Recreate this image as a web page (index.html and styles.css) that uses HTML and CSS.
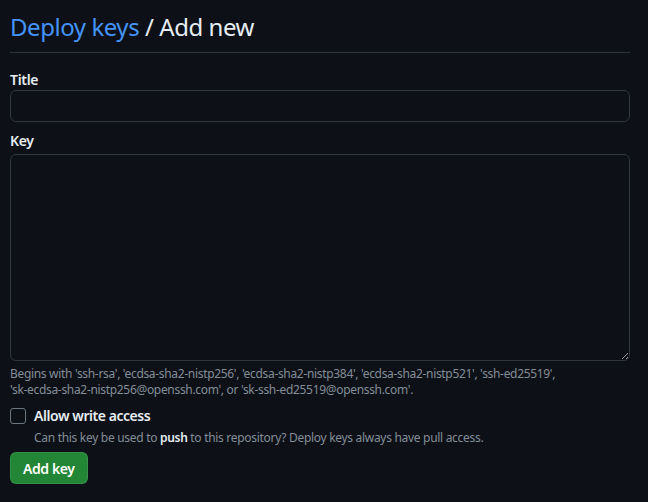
FILE: index.html
```html
<!DOCTYPE html>
<html>
<head>
<meta charset="utf-8">
<link rel="stylesheet" href="styles.css">
</head>
<body>
<div class="page">
  <div class="subhead">
    <h2 class="subhead-heading"><a class="crumb" href="#">Deploy keys</a> / Add new</h2>
  </div>
  <form class="form">
    <div class="field field-title">
      <label class="label" for="title">Title</label>
      <input class="input" id="title" type="text">
    </div>
    <div class="field">
      <label class="label label-key" for="key">Key</label>
      <textarea class="input textarea" id="key"></textarea>
      <p class="note">Begins with 'ssh-rsa', 'ecdsa-sha2-nistp256', 'ecdsa-sha2-nistp384', 'ecdsa-sha2-nistp521', 'ssh-ed25519', <span class="nowrap">'sk-ecdsa-sha2-nistp256@openssh.com',</span> or 'sk-ssh-ed25519@openssh.com'.</p>
    </div>
    <div class="check">
      <div class="check-row">
        <span class="box"></span>
        <span class="check-label">Allow write access</span>
      </div>
      <p class="check-note">Can this key be used to <strong>push</strong> to this repository? Deploy keys always have pull access.</p>
    </div>
    <button class="btn" type="button">Add key</button>
  </form>
</div>
</body>
</html>
```
FILE: styles.css
```css
* { box-sizing: border-box; }
html, body {
  margin: 0;
  background: #0d1117;
  color: #e6edf3;
  font-family: "Segoe UI", "Noto Sans", "Liberation Sans", sans-serif;
  font-size: 14px;
}
.page {
  width: 620px;
  margin-left: 10px;
  padding-top: 9px;
}
.subhead {
  border-bottom: 1px solid #30363d;
  padding-bottom: 7px;
  margin-bottom: 17px;
}
.subhead-heading {
  margin: 0;
  font-size: 24px;
  font-weight: 400;
  line-height: 36px;
  letter-spacing: -0.45px;
}
.crumb {
  color: #4493f8;
  text-decoration: none;
}
.form { display: flex; flex-direction: column; }
.field { display: flex; flex-direction: column; }
.field-title { margin-bottom: 9px; }
.label {
  font-weight: 600;
  line-height: 20px;
  letter-spacing: -0.3px;
}
.label-key { margin-bottom: 3px; }
.input {
  height: 32px;
  background: #0d1117;
  border: 1px solid #30363d;
  border-radius: 6px;
  color: #e6edf3;
  font: inherit;
  padding: 5px 12px;
}
.textarea {
  height: 207px;
  resize: vertical;
}
.note {
  margin: 5px 0 0;
  font-size: 12px;
  line-height: 16px;
  color: #848d97;
  letter-spacing: -0.32px;
}
.nowrap { white-space: nowrap; }
.check { margin: 8px 0 6px; }
.check-row { display: flex; align-items: center; gap: 8px; }
.box {
  width: 16px;
  height: 16px;
  border: 1px solid #6e7681;
  border-radius: 3px;
  background: #0d1117;
}
.check-label { font-weight: 600; line-height: 20px; letter-spacing: -0.45px; }
.check-note {
  margin: 4px 0 0 24px;
  font-size: 12px;
  line-height: 16px;
  color: #848d97;
  letter-spacing: -0.3px;
}
.check-note strong { font-weight: 600; color: #e6edf3; }
.btn {
  align-self: flex-start;
  height: 32px;
  padding: 0 12px;
  background: #238636;
  color: #ffffff;
  border: 1px solid rgba(240, 246, 252, 0.1);
  border-radius: 6px;
  font: inherit;
  font-weight: 600;
  letter-spacing: -0.4px;
}
```
